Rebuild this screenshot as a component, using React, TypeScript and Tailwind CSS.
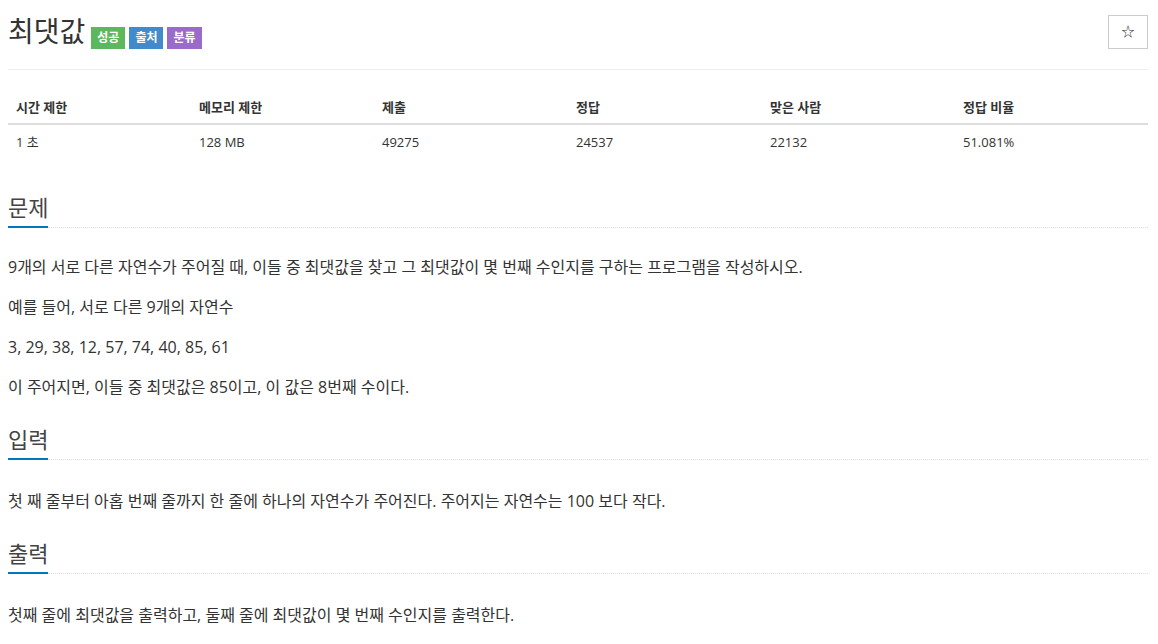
import React from 'react';

const font = "font-['Open_Sans','Noto_Sans_CJK_KR',sans-serif]";

const stats = [
  { label: '시간 제한', value: '1 초' },
  { label: '메모리 제한', value: '128 MB' },
  { label: '제출', value: '49275' },
  { label: '정답', value: '24537' },
  { label: '맞은 사람', value: '22132' },
  { label: '정답 비율', value: '51.081%' },
];

const Headline: React.FC<{ title: string; className?: string }> = ({ title, className }) => (
  <div className={`flex items-end ${className ?? ''}`}>
    <h2 className="w-10 whitespace-nowrap text-[22px] leading-[30px] pb-[4px] border-b-2 border-[#0076c0] text-[#444]">{title}</h2>
    <div className="flex-1 border-b border-dotted border-[#ddd]" />
  </div>
);

const App: React.FC = () => {
  return (
    <div className={`min-h-[644px] bg-white pl-2 pr-[10px] text-[#333] ${font}`}>
      {/* title */}
      <div className="flex items-start justify-between">
        <div className="flex items-end mt-[13px]">
          <h1 className="text-[28px] leading-[36px] text-[#333]">최댓값</h1>
          <div className="flex gap-1 ml-[6px]">
            <span className="h-[22px] px-[6px] flex items-center text-[12px] font-bold text-white bg-[#5cb85c]">성공</span>
            <span className="h-[22px] px-[6px] flex items-center text-[12px] font-bold text-white bg-[#428bca]">출처</span>
            <span className="h-[22px] px-[6px] flex items-center text-[12px] font-bold text-white bg-[#9b6bcc]">분류</span>
          </div>
        </div>
        <button className="mt-[15px] w-10 h-[34px] border border-[#ccc] bg-white flex items-center justify-center text-[13px] text-[#333]">
          ☆
        </button>
      </div>
      <div className="mt-5 border-t border-[#eee]" />

      {/* stats table */}
      <div className="mt-5 grid grid-cols-[183px_183px_194px_194px_193px_193px] text-[13px] leading-[18px]">
        {stats.map((s) => (
          <div key={s.label} className="px-2 pt-2 pb-[7px] font-bold border-b-2 border-[#ddd]">
            {s.label}
          </div>
        ))}
        {stats.map((s) => (
          <div key={s.label + 'v'} className="px-2 py-2">
            {s.value}
          </div>
        ))}
      </div>

      {/* 문제 */}
      <Headline title="문제" className="mt-[33px]" />
      <div className="mt-[28px] text-[16px] leading-[22px] space-y-[18px]">
        <p>9개의 서로 다른 자연수가 주어질 때, 이들 중 최댓값을 찾고 그 최댓값이 몇 번째 수인지를 구하는 프로그램을 작성하시오.</p>
        <p>예를 들어, 서로 다른 9개의 자연수</p>
        <p>3, 29, 38, 12, 57, 74, 40, 85, 61</p>
        <p>이 주어지면, 이들 중 최댓값은 85이고, 이 값은 8번째 수이다.</p>
      </div>

      {/* 입력 */}
      <Headline title="입력" className="mt-[26px]" />
      <p className="mt-[30px] text-[16px] leading-[22px]">
        첫 째 줄부터 아홉 번째 줄까지 한 줄에 하나의 자연수가 주어진다. 주어지는 자연수는 100 보다 작다.
      </p>

      {/* 출력 */}
      <Headline title="출력" className="mt-[26px]" />
      <p className="mt-[30px] text-[16px] leading-[22px]">
        첫째 줄에 최댓값을 출력하고, 둘째 줄에 최댓값이 몇 번째 수인지를 출력한다.
      </p>
    </div>
  );
};

export default App;
